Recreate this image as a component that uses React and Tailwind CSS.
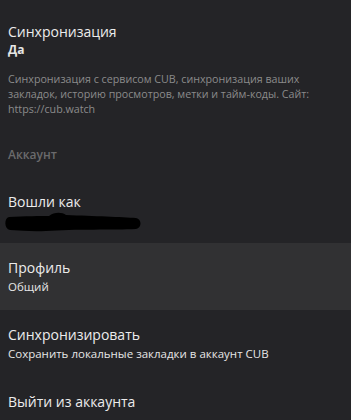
const font = { fontFamily: '"Open Sans", "Noto Sans", sans-serif' };

function Item({ title, sub, active, children }) {
    return (
        <div className={`px-2 pt-[15px] pb-[15px] ${active ? 'bg-[#313133]' : ''}`}>
            <div className="text-[14px] leading-[20px] text-[#ececec]">{title}</div>
            {sub && <div className="mt-px text-[11.5px] font-medium leading-[16px] text-[#e6e6e6]">{sub}</div>}
            {children}
        </div>
    );
}

function Redacted() {
    return (
        <svg width="138" height="20" viewBox="0 0 138 20" className="-ml-[4px] block">
            <path
                d="M5 5 C 20 4, 38 4, 45 4 C 50 0, 58 0, 62 3 C 90 4, 118 5, 132 6 C 138 7, 138 16, 132 17 C 110 18, 70 17, 42 19 C 30 19.5, 18 19, 6 18 C 0 17, 0 6, 5 5 Z"
                fill="#000"
            />
        </svg>
    );
}

export default function App() {
    return (
        <div className="h-[420px] w-[351px] overflow-hidden bg-[#242427]" style={font}>
            <div className="px-2 pt-[22px]">
                <div className="text-[14px] leading-[20px] text-[#ececec]">Синхронизация</div>
                <div className="text-[12px] font-bold leading-[16px] text-[#e6e6e6]">Да</div>
                <p className="mt-[14px] pr-2 text-[10.7px] leading-[15px] text-[#8b8b8b]">
                    Синхронизация с сервисом CUB, синхронизация ваших закладок, историю просмотров, метки и тайм-коды. Сайт: https://cub.watch
                </p>
            </div>
            <div className="mt-[30px] px-2 text-[12px] font-semibold leading-[16px] text-[#6a6a6c]">Аккаунт</div>
            <div className="px-2 pt-[29px] pb-[11px]">
                <div className="text-[14px] leading-[20px] text-[#ececec]">Вошли как</div>
                <Redacted />
            </div>
            <Item title="Профиль" sub="Общий" active />
            <Item title="Синхронизировать" sub="Сохранить локальные закладки в аккаунт CUB" />
            <Item title="Выйти из аккаунта" />
        </div>
    );
}
